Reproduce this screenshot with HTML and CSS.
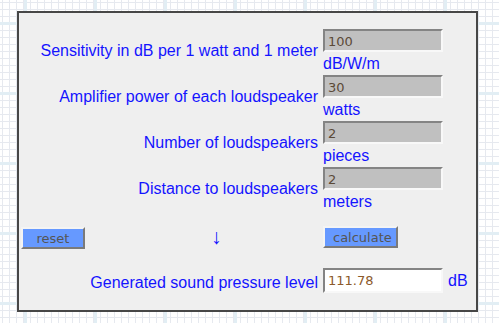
FILE: index.html
```html
<!DOCTYPE html>
<html lang="en">
<head>
  <meta charset="UTF-8">
  <title>Sound Pressure Level</title>
  <link rel="stylesheet" href="styles.css">
</head>
<body>
  <div class="panel">
    <div class="grid">
      <label class="label" for="sens">Sensitivity in dB per 1 watt and 1 meter</label>
      <div class="field">
        <input class="value" id="sens" type="text" value="100" readonly>
        <span class="unit">dB/W/m</span>
      </div>

      <label class="label" for="power">Amplifier power of each loudspeaker</label>
      <div class="field">
        <input class="value" id="power" type="text" value="30" readonly>
        <span class="unit">watts</span>
      </div>

      <label class="label" for="count">Number of loudspeakers</label>
      <div class="field">
        <input class="value" id="count" type="text" value="2" readonly>
        <span class="unit">pieces</span>
      </div>

      <label class="label" for="dist">Distance to loudspeakers</label>
      <div class="field">
        <input class="value" id="dist" type="text" value="2" readonly>
        <span class="unit">meters</span>
      </div>

      <div class="actions">
        <button class="btn reset-btn">reset</button>
        <span class="arrow">&#8595;</span>
      </div>
      <div class="field">
        <button class="btn calc-btn">calculate</button>
      </div>

      <label class="label result-label" for="spl">Generated sound pressure level</label>
      <div class="result">
        <input class="value output" id="spl" type="text" value="111.78" readonly>
        <span class="unit db">dB</span>
      </div>
    </div>
  </div>
</body>
</html>
```

FILE: styles.css
```css
body {
  margin: 0;
  width: 499px;
  height: 323px;
  overflow: hidden;
  font-family: "Liberation Sans", Arial, sans-serif;
  background-color: #ffffff;
  background-image:
    linear-gradient(90deg, #e2eef4 3px, transparent 3px),
    linear-gradient(#e2eef4 3px, transparent 3px),
    linear-gradient(90deg, #e6e9ef 1px, transparent 1px),
    linear-gradient(#e6e9ef 1px, transparent 1px);
  background-size: 70px 70px, 70px 70px, 7px 7px, 7px 7px;
  background-position: 24px 0, 0 22px, 2px 2px, 2px 2px;
}
.panel {
  margin: 11px 0 0 17px;
  width: 457px;
  height: 297px;
  border: 2px solid #474747;
  background-color: #efefef;
}
.grid {
  display: grid;
  grid-template-columns: 297px 150px;
  column-gap: 5px;
  padding: 16px 0 0 2px;
}
.label {
  text-align: right;
  font-size: 16px;
  color: #1414ff;
  padding-top: 13px;
  height: 33px;
}
.field {
  display: flex;
  flex-direction: column;
  align-items: flex-start;
  height: 46px;
}
.value {
  width: 120px;
  height: 23px;
  box-sizing: border-box;
  margin: 0;
  padding: 1px 3px 0;
  border-style: solid;
  border-width: 2px;
  border-color: #848484 #f8f8f8 #f8f8f8 #848484;
  background-color: #c0c0c0;
  font-family: "DejaVu Sans", sans-serif;
  font-size: 13px;
  color: #5b4a38;
  outline: none;
}
.unit {
  font-size: 16px;
  color: #1414ff;
  line-height: 19px;
  padding-top: 2px;
}
.actions {
  display: flex;
  align-items: center;
  height: 52px;
}
.btn {
  height: 22px;
  margin: 0;
  padding: 0 8px;
  border-style: solid;
  border-width: 2px;
  border-color: #f4f4f4 #7a7a7a #7a7a7a #f4f4f4;
  background-color: #6699ff;
  font-family: "DejaVu Sans", sans-serif;
  font-size: 13px;
  color: #555555;
  cursor: pointer;
}
.reset-btn {
  width: 64px;
  margin-top: -2px;
}
.calc-btn {
  width: 75px;
  margin-top: 13px;
}
.arrow {
  margin-left: 126px;
  margin-top: -4px;
  font-size: 21px;
  color: #1414ff;
}
.result-label {
  padding-top: 9px;
}
.result {
  display: flex;
  align-items: center;
  gap: 5px;
  height: 30px;
}
.output {
  height: 25px;
  background-color: #ffffff;
  color: #8b5a2b;
}
.db {
  padding-top: 0;
}
```
